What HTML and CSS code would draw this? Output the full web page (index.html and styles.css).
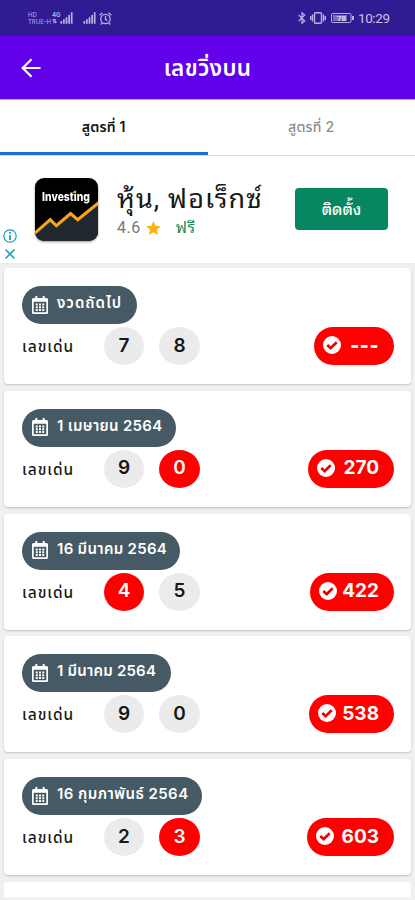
FILE: index.html
```html
<!DOCTYPE html>
<html lang="th">
<head>
<meta charset="utf-8">
<meta name="viewport" content="width=device-width, initial-scale=1">
<title>เลขวิ่งบน</title>
<link rel="stylesheet" href="styles.css">
</head>
<body>
<svg class="defs" aria-hidden="true">
  <symbol id="calendar" viewBox="0 0 16 18"><path fill="currentColor" fill-rule="evenodd" d="M3.3 0h2v2h5.4V0h2v2H14.500q1.500 0 1.500 1.500v13q0 1.500-1.500 1.500h-13Q0 18 0 16.500v-13Q0 2 1.500 2h1.800zM1.700 5.700v10.600h12.600V5.700z"/><path stroke="currentColor" stroke-width="2" stroke-dasharray="2 1.200" d="M3.800 8.500h8.400M3.800 11.200h8.400M3.800 13.900h8.400"/></symbol>
  <symbol id="check" viewBox="0 0 18 18"><circle cx="9" cy="9" r="9" fill="#fff"/><path d="M4.300 9l3.300 3.200 6.100-6" fill="none" stroke="#e80000" stroke-width="2.600"/></symbol>
  <symbol id="signal" viewBox="0 0 15 13"><path d="M1.500 13v-3M4.500 13V8M7.500 13V5.500M10.500 13V3M13.500 13V0" stroke="currentColor" stroke-width="2"/></symbol>
</svg>
<header class="status">
  <div class="carrier"><span>HD</span><span>TRUE-H</span></div>
  <div class="network"><span>4G</span><span>⇅</span></div>
  <svg class="bars"><use href="#signal"/></svg>
  <svg class="bars second"><use href="#signal"/></svg>
  <svg class="alarm" viewBox="0 0 13 13" fill="none" stroke="currentColor" stroke-width="1.300"><circle cx="6.500" cy="7" r="4.700"/><path d="M6.500 4v3.300l2 1M.7 3.200L3.400.8M12.300 3.200L9.600.8M3 11l-1.300 1.500M10 11l1.300 1.500"/></svg>
  <div class="device">
    <svg width="8" height="12" viewBox="0 0 8 12" fill="none" stroke="currentColor" stroke-width="1.200"><path d="M.7 3l6 6L4 11.300V.7L6.700 3l-6 6"/></svg>
    <svg class="vibrate" width="16" height="12" viewBox="0 0 16 12" fill="none" stroke="currentColor" stroke-width="1.400"><rect x="4.500" y=".7" width="7" height="10.600" rx="1"/><path d="M2.500 2.500v7M.7 4v4M13.500 2.500v7M15.300 4v4"/></svg>
    <svg class="battery" width="23" height="10" viewBox="0 0 23 10"><rect x=".5" y=".5" width="19.500" height="9" rx="1.500" fill="none" stroke="currentColor"/><path fill="currentColor" opacity=".55" d="M2 2h14v6H2z"/><path fill="currentColor" d="M21 3h2v4h-2z"/><text x="10.500" y="8" text-anchor="middle">78</text></svg>
    <time>10:29</time>
  </div>
</header>
<div class="appbar">
  <svg class="back" viewBox="0 0 20 20" fill="none" stroke="#fff" stroke-width="2.200"><path d="M19.500 10H2M10.500 1.200L1.700 10l8.800 8.800"/></svg>
  <h1>เลขวิ่งบน</h1>
</div>
<nav class="tabs"><a class="active">สูตรที่ 1</a><a>สูตรที่ 2</a></nav>
<section class="ad">
  <div class="adinfo">
    <svg width="14" height="14" viewBox="0 0 14 14" fill="none" stroke="#1c9fc0"><circle cx="7" cy="7" r="6.200" stroke-width="1.200"/><path stroke-width="1.800" d="M7 6v5M7 3v1.800"/></svg>
    <svg width="12" height="12" viewBox="0 0 12 12" stroke="#1c9fc0" stroke-width="1.600"><path d="M1.500 1.500l9 9M10.500 1.500l-9 9"/></svg>
  </div>
  <svg class="logo" viewBox="0 0 62 62"><defs><clipPath id="tile"><rect width="62" height="62" rx="9"/></clipPath></defs><g clip-path="url(#tile)"><path fill="#000" d="M0 0h62v62H0z"/><path fill="#20282f" d="M0 54l15-13 6 6 14-12 7 6 20-16v37H0z"/><path fill="none" stroke="#f9a51a" stroke-width="3" d="M-1 55l16-14 6 6 14-12 7 6 21-17"/></g><text x="7" y="23" textLength="47" lengthAdjust="spacingAndGlyphs">Investing</text><path fill="#f9a51a" d="M37.500 13.500l3-1.500v3h-3z"/></svg>
  <div class="adcopy"><h2>หุ้น, ฟอเร็กซ์</h2><p>4.6 <svg width="15" height="14" viewBox="0 0 20 19"><path fill="#f9b414" d="M10 0l2.900 6.500 7.100.7-5.300 4.700 1.500 7L10 15.300 3.800 18.900l1.500-7L0 7.200l7.100-.7z"/></svg><span>ฟรี</span></p></div>
  <button>ติดตั้ง</button>
</section>
<main>
  <article><div class="date w1"><svg><use href="#calendar"/></svg><span>งวดถัดไป</span></div><div class="row"><span class="label">เลขเด่น</span><b>7</b><b>8</b><div class="result r1"><svg><use href="#check"/></svg><span class="dash">---</span></div></div></article>
  <article><div class="date w2"><svg><use href="#calendar"/></svg><span>1 เมษายน 2564</span></div><div class="row"><span class="label">เลขเด่น</span><b>9</b><b class="hit">0</b><div class="result r2"><svg><use href="#check"/></svg><span>270</span></div></div></article>
  <article><div class="date w3"><svg><use href="#calendar"/></svg><span>16 มีนาคม 2564</span></div><div class="row"><span class="label">เลขเด่น</span><b class="hit">4</b><b>5</b><div class="result r3"><svg><use href="#check"/></svg><span>422</span></div></div></article>
  <article><div class="date w4"><svg><use href="#calendar"/></svg><span>1 มีนาคม 2564</span></div><div class="row"><span class="label">เลขเด่น</span><b>9</b><b>0</b><div class="result r4"><svg><use href="#check"/></svg><span>538</span></div></div></article>
  <article><div class="date w5"><svg><use href="#calendar"/></svg><span>16 กุมภาพันธ์ 2564</span></div><div class="row"><span class="label">เลขเด่น</span><b>2</b><b class="hit">3</b><div class="result r5"><svg><use href="#check"/></svg><span>603</span></div></div></article>
  <article class="next"></article>
</main>
</body>
</html>
```
FILE: styles.css
```css
* { box-sizing: border-box; }
body { margin: 0; width: 415px; height: 900px; overflow: hidden; display: flex; flex-direction: column; background: #fff; font-family: Inter, "Noto Sans Thai", "Noto Sans", sans-serif; color: #171717; }
.defs { position: absolute; width: 0; height: 0; }
h1, h2, p { margin: 0; }
span, h1, h2, p, a, button { white-space: nowrap; }
.status { height: 36px; flex: none; background: #311b92; color: #b9afe0; display: flex; align-items: center; padding: 0 25px 0 28px; }
.carrier { width: 24px; font-size: 6px; line-height: 7px; display: flex; flex-direction: column; }
.network { width: 8px; font-size: 6px; line-height: 6px; display: flex; flex-direction: column; font-weight: 700; }
.bars { width: 13px; height: 12px; }
.second { margin-left: 10px; }
.alarm { width: 13px; height: 13px; margin-left: 3px; }
.device { margin-left: auto; display: flex; align-items: center; }
.vibrate { margin-left: 4px; }
.battery { margin-left: 5px; }
.battery text { font: 700 8px Roboto, sans-serif; fill: #e0daf7; }
time { font: 13.500px Roboto, sans-serif; margin-left: 4px; width: 32px; white-space: nowrap; letter-spacing: -.4px; color: #cbc3ec; }
.appbar { height: 63px; flex: none; background: #6200ea; display: grid; grid-template-columns: 62px 1fr 62px; align-items: center; }
.back { width: 20px; height: 20px; margin-left: 21px; }
h1 { color: #fff; text-align: center; font-size: 22.500px; font-weight: 600; line-height: 32px; letter-spacing: .3px; }
.tabs { height: 57px; flex: none; display: grid; grid-template-columns: 1fr 1fr; border-bottom: 1px solid #ddd; border-top: 1px solid #c6a2f6; }
.tabs a { display: flex; align-items: center; justify-content: center; font-size: 14px; font-weight: 500; color: #8c8c8c; letter-spacing: .2px; }
.tabs .active { color: #111; font-weight: 600; border-bottom: 3px solid #1d70d2; padding-top: 2px; }
.ad { height: 107px; flex: none; display: flex; font-family: Roboto, "Noto Sans Thai Looped", "Noto Looped Thai", Loma, Garuda, "Noto Sans Thai", sans-serif; }
.adinfo { width: 35px; padding: 73px 0 0 3px; display: flex; flex-direction: column; gap: 5px; }
.adinfo svg + svg { margin-left: 1px; }
.logo { width: 63px; height: 63px; margin-top: 22px; filter: drop-shadow(0 1px 1px #999); }
.logo text { font: 800 12px Inter, sans-serif; fill: #fff; }
.adcopy { padding: 26px 0 0 19px; width: 197px; }
h2 { font-size: 27px; font-weight: 400; line-height: 34px; letter-spacing: 1.100px; }
.adcopy p { display: flex; align-items: center; font-size: 16px; line-height: 22px; color: #777; margin-top: 1px; letter-spacing: .5px; }
.adcopy p svg { margin-left: 5px; }
.adcopy p span { color: #168c5c; margin-left: 15px; }
button { width: 93px; height: 42px; margin: 32px 0 0; padding: 0 0 2px; border: 0; border-radius: 4px; background: #078761; color: #fff; font-family: inherit; font-weight: 500; font-size: 16px; }
main { background: #f0f0f0; flex: 1; padding: 4px 4px 3px; display: flex; flex-direction: column; gap: 6.800px; border-top: 1px solid #ececec; overflow: hidden; }
article { height: 116px; flex: none; border-radius: 4px; background: #fff; box-shadow: 0 1px 2px #0003; padding: 18px 17px 0 18px; }
.next { height: auto; flex: 1; border-radius: 4px 4px 0 0; box-shadow: none; padding: 0; }
.date { height: 38px; border-radius: 19px; background: #455a64; color: #fff; display: flex; align-items: center; padding: 0 0 1px 10px; font-size: 15px; font-weight: 600; letter-spacing: .3px; }
.date svg { width: 16px; height: 18px; margin-right: 9px; }
.date span { padding-bottom: 2px; }
.w1 { width: 115px; letter-spacing: 1px; }
.w2 { width: 154px; }
.w3 { width: 158px; }
.w4 { width: 149px; letter-spacing: .2px; }
.w5 { width: 180px; letter-spacing: .45px; }
.row { display: flex; height: 38px; margin-top: 3px; align-items: center; }
.label { width: 82px; font-size: 15.500px; font-weight: 500; letter-spacing: 1px; padding-top: 3px; }
b { width: 40px; height: 38px; border-radius: 50%; background: #ebebeb; display: grid; place-items: center; font-size: 19px; font-weight: 600; line-height: 1; padding-bottom: 2px; }
b + b { margin-left: 15px; width: 41px; }
.hit { background: #f00; color: #fff; }
.result { height: 38px; border-radius: 19px; background: #f00; color: #fff; margin-left: auto; display: flex; align-items: center; justify-content: space-between; padding: 0 15px 2px 9px; font-size: 19px; font-weight: 700; }
.result svg { width: 18px; height: 18px; }
.dash { letter-spacing: .6px; font-weight: 900; }
.r1 { width: 80px; }
.r2 { width: 86px; }
.r3 { width: 84px; }
.r4 { width: 85px; }
.r5 { width: 87px; }
```
